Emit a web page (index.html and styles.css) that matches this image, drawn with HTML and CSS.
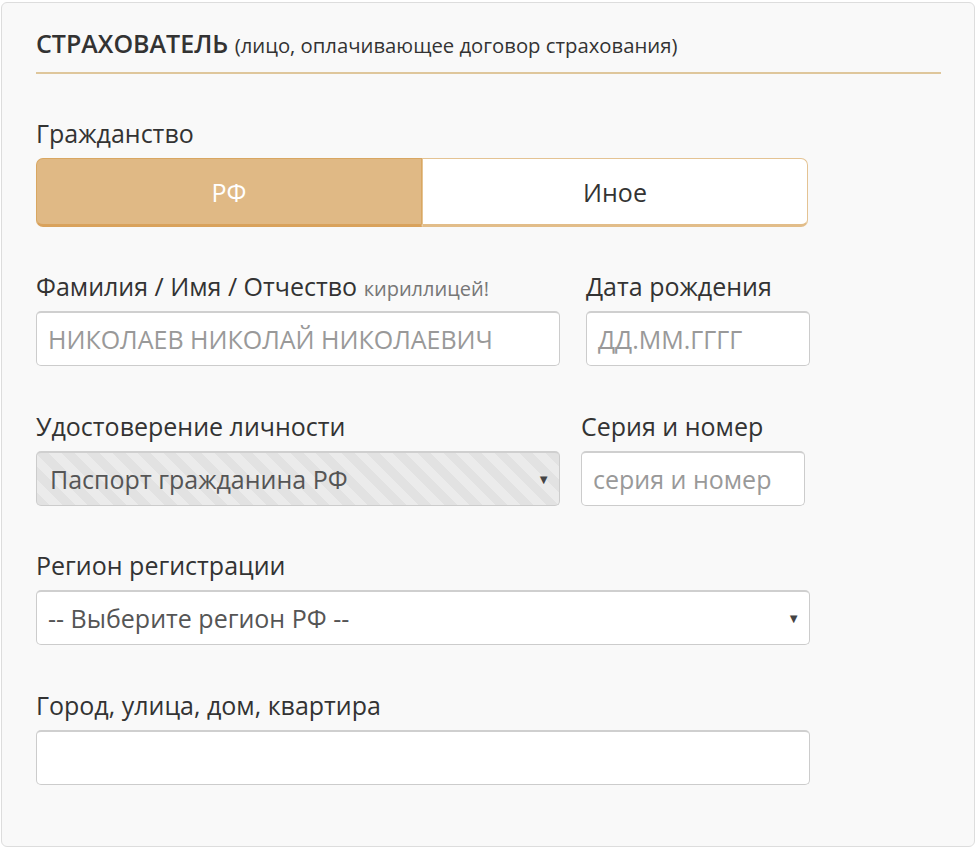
FILE: index.html
```html
<!DOCTYPE html>
<html lang="ru">
<head>
<meta charset="utf-8">
<link rel="stylesheet" href="styles.css">
</head>
<body>
<div class="panel">
  <h2 class="title"><span class="title-main">СТРАХОВАТЕЛЬ</span> <span class="title-sub">(лицо, оплачивающее договор страхования)</span></h2>

  <div class="field first">
    <div class="label">Гражданство</div>
    <div class="toggle">
      <div class="tbtn active">РФ</div>
      <div class="tbtn">Иное</div>
    </div>
  </div>

  <div class="row row-a">
    <div class="field">
      <div class="label">Фамилия / Имя / Отчество <span class="hint">кириллицей!</span></div>
      <div class="input"><span class="ph">НИКОЛАЕВ НИКОЛАЙ НИКОЛАЕВИЧ</span></div>
    </div>
    <div class="field">
      <div class="label">Дата рождения</div>
      <div class="input"><span class="ph">ДД.ММ.ГГГГ</span></div>
    </div>
  </div>

  <div class="row row-b">
    <div class="field">
      <div class="label">Удостоверение личности</div>
      <div class="select disabled"><span>Паспорт гражданина РФ</span><span class="arrow">▼</span></div>
    </div>
    <div class="field">
      <div class="label">Серия и номер</div>
      <div class="input"><span class="ph">серия и номер</span></div>
    </div>
  </div>

  <div class="field wide">
    <div class="label">Регион регистрации</div>
    <div class="select"><span>-- Выберите регион РФ --</span><span class="arrow">▼</span></div>
  </div>

  <div class="field wide">
    <div class="label">Город, улица, дом, квартира</div>
    <div class="input"></div>
  </div>
</div>
</body>
</html>
```

FILE: styles.css
```css
html, body {
  margin: 0;
  padding: 0;
  background: #ffffff;
}
body {
  font-family: "Open Sans", "Noto Sans", sans-serif;
  color: #333333;
}
.panel {
  margin: 2px 2px 0 1px;
  height: 845px;
  box-sizing: border-box;
  border: 1px solid #dddddd;
  border-radius: 6px;
  background: #f9f9f9;
  padding: 0 33px 0 34px;
}
.title {
  margin: 0 0 44px 0;
  padding: 25px 0 14px 0;
  height: 30px;
  font-size: 25px;
  line-height: 30px;
  border-bottom: 2px solid #dfc79c;
  font-weight: normal;
  white-space: nowrap;
}
.title-main {
  font-size: 25px;
  font-weight: 600;
  color: #333;
}
.title-sub {
  font-size: 20.3px;
  line-height: 20px;
  color: #333;
}
.field {
  margin-bottom: 45px;
}
.field.first {
  margin-bottom: 44px;
}
.row-b {
  margin-bottom: -1px;
}
.label {
  font-size: 25px;
  line-height: 30px;
  margin-bottom: 10px;
  color: #333;
  white-space: nowrap;
}
.hint {
  font-size: 20px;
  line-height: 20px;
  color: #777;
}
.toggle {
  display: flex;
  width: 772px;
  height: 69px;
  margin-top: 3px;
}
.tbtn {
  flex: 1;
  display: flex;
  align-items: center;
  justify-content: center;
  font-size: 25px;
  box-sizing: border-box;
}
.tbtn.active {
  background: #e0b985;
  border: 1px solid #d9a762;
  border-bottom: 3px solid #d9a25c;
  border-radius: 7px 0 0 7px;
  color: #ffffff;
}
.tbtn:not(.active) {
  background: #ffffff;
  border: 1px solid #e4c393;
  border-bottom: 3px solid #e2bd89;
  border-radius: 0 7px 7px 0;
  color: #333;
}
.row {
  display: flex;
}
.row-a { gap: 26px; }
.row-b { gap: 21px; }
.row .field:first-child { width: 524px; }
.row .field:last-child { width: 224px; }
.wide { width: 774px; }
.input, .select {
  height: 55px;
  box-sizing: border-box;
  border: 1px solid #cccccc;
  border-top: 2px solid #cfcfcf;
  border-radius: 5px;
  background: #ffffff;
  display: flex;
  align-items: center;
  padding: 0 11px;
  font-size: 25px;
  white-space: nowrap;
  overflow: hidden;
}
.ph {
  color: #999999;
}
.select {
  justify-content: space-between;
  color: #555555;
}
.select.disabled {
  background: repeating-linear-gradient(45deg, #e2e2e2 0 9px, #ebebeb 9px 18px);
  padding-left: 13px;
}
.arrow {
  font-size: 13px;
  color: #444;
  margin-right: -2px;
}
```
